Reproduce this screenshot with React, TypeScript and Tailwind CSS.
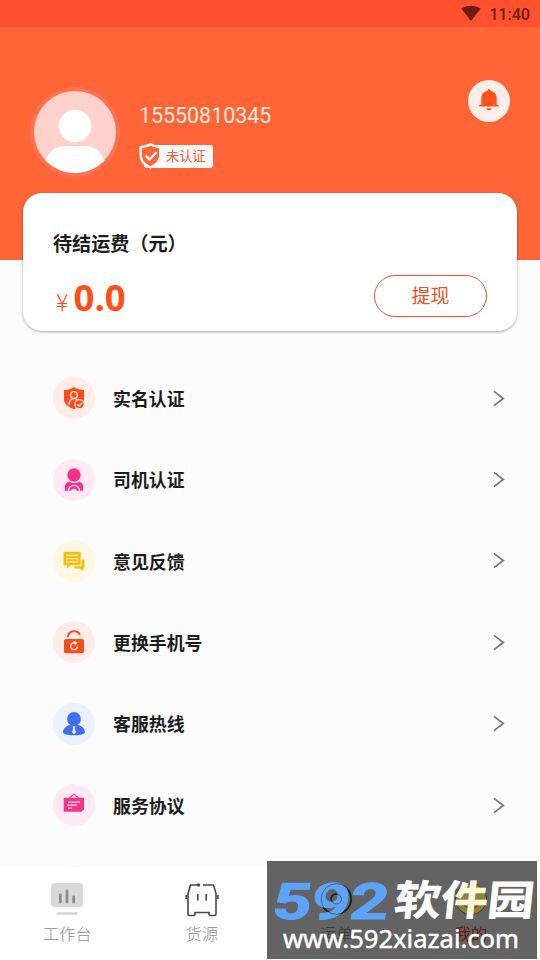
import type { ReactNode } from "react";

const menu: { label: string; bg: string; icon: ReactNode }[] = [
  { label: "实名认证", bg: "bg-[#feece6]", icon: <IdentityIcon /> },
  { label: "司机认证", bg: "bg-[#ffeaf4]", icon: <DriverIcon /> },
  { label: "意见反馈", bg: "bg-[#fdf8e4]", icon: <FeedbackIcon /> },
  { label: "更换手机号", bg: "bg-[#feece8]", icon: <LockIcon /> },
  { label: "客服热线", bg: "bg-[#ecf1fe]", icon: <ServiceIcon /> },
  { label: "服务协议", bg: "bg-[#ffeaf3]", icon: <AgreementIcon /> },
  { label: "", bg: "bg-[#fbf8d8]", icon: null },
];

export default function App() {
  return (
    <div className="relative flex h-[960px] w-[540px] flex-col overflow-hidden bg-[#fcfcfc] font-['Roboto','Noto_Sans_CJK_SC',sans-serif] text-[#1c1c1c]">
      <header className="h-[260px] shrink-0 bg-[#ff6536]">
        <div className="flex h-[27px] items-center justify-end bg-[#ff512e] pr-[10px] text-[#6b1d10]">
          <svg className="mr-[8px] h-[17px] w-[20px]" viewBox="0 0 20 17" fill="currentColor">
            <path d="M0.3 3.6C6-.3 14-.3 19.7 3.6L10 16z" />
          </svg>
          <span className="pt-[3px] text-[16.3px] leading-none font-medium tracking-[-0.1px]">11:40</span>
        </div>
        <div className="flex pl-[30px]">
          <Avatar />
          <div className="ml-[19px] flex flex-col pt-[75px]">
            <span className="text-[21.4px] leading-[27px] text-[#ffe9df]">15550810345</span>
            <Badge />
          </div>
          <button className="mt-[53px] mr-[30px] ml-auto flex size-[42px] items-center justify-center rounded-full bg-[#fdeee9]">
            <svg className="size-[24px]" viewBox="0 0 24 24" fill="#ff5217">
              <path d="M12 .2c1 0 1.500.600 1.600 1.500 3.600 1 6.100 3.600 6.100 7.100v7h1.500c.9 0 .9 1.600 0 1.600H2.800c-.9 0-.9-1.600 0-1.600h1.500v-7c0-3.500 2.500-6.100 6.100-7.100.1-.9.600-1.500 1.600-1.500z" />
              <path d="M9.200 19.300h5.600c-.4 1.300-1.400 2-2.800 2s-2.400-.7-2.800-2z" />
            </svg>
          </button>
        </div>
      </header>

      <section className="relative mx-[23px] -mt-[67px] h-[138px] shrink-0 rounded-[19px] bg-white px-[30px] pt-[38px] shadow-[0_1px_3px_rgba(0,0,0,0.35)]">
        <h1 className="text-[19.1px] leading-[27px] font-bold">待结运费（元）</h1>
        <div className="mt-[17px] flex items-center justify-between text-[#ff5019]">
          <div className="flex h-[42px] items-baseline pl-[3px]">
            <span className="mr-[5px] font-['Noto_Sans_CJK_SC',sans-serif] text-[23.5px] leading-[42px] font-light">¥</span>
            <span className="font-['Open_Sans',sans-serif] text-[36.5px] leading-[44px] font-bold">0.0</span>
          </div>
          <button className="h-[42px] w-[113px] rounded-full border-[1.5px] border-[#f15536] pt-[2px] text-[19px] text-[#ee5022]">
            提现
          </button>
        </div>
      </section>

      <ul className="mt-[26.5px] flex flex-col">
        {menu.map((m, i) => (
          <li key={i} className="flex h-[81.4px] shrink-0 items-center pr-[35px] pl-[53px]">
            <span className={`flex size-[42px] items-center justify-center rounded-full ${m.bg}`}>{m.icon}</span>
            <span className="ml-[18px] pt-[3px] text-[17.9px] leading-none font-bold">{m.label}</span>
            <svg className="ml-auto h-[17px] w-[12px]" viewBox="0 0 12 17" fill="none" stroke="#777" strokeWidth="1.700">
              <path d="M1 1.300l9.300 7.200L1 15.700" />
            </svg>
          </li>
        ))}
      </ul>

      <nav className="absolute inset-x-0 bottom-0 flex h-[93px] bg-white">
        <Tab label="工作台" icon={<DeskIcon />} />
        <Tab label="货源" icon={<CargoIcon />} />
        <Tab label="运单" icon={<OrderIcon />} />
        <Tab label="我的" icon={<MineIcon />} active />
      </nav>

      <Watermark />
    </div>
  );
}

function Tab({ label, icon, active }: { label: string; icon: ReactNode; active?: boolean }) {
  return (
    <div className="flex w-[134.600px] flex-col items-center pt-[15px]">
      {icon}
      <span className={`mt-[5px] text-[16.3px] leading-[24px] ${active ? "text-[#ff4a20]" : "font-light text-[#8e8e8e]"}`}>
        {label}
      </span>
    </div>
  );
}

function Avatar() {
  return (
    <svg className="mt-[60px] size-[90px]" viewBox="0 0 90 90">
      <defs>
        <clipPath id="face">
          <circle cx="45" cy="45" r="41" />
        </clipPath>
      </defs>
      <circle cx="45" cy="45" r="45" fill="#ff7150" />
      <circle cx="45" cy="45" r="41" fill="#ffd1cb" />
      <g fill="#fff" clipPath="url(#face)">
        <circle cx="45" cy="39" r="16.300" />
        <path d="M14 79c3-13 10-20 20-20h22c10 0 17 7 20 20v10H14z" />
      </g>
    </svg>
  );
}

function Badge() {
  return (
    <div className="relative mt-[16px] ml-[5px] flex h-[23px] w-[69px] items-center rounded-[3px] bg-[#fffaf7] pl-[22px] text-[13.2px] leading-none text-[#ee6138]">
      <svg className="absolute -top-[2px] left-[-5px] h-[26px] w-[23px]" viewBox="0 0 23 26">
        <path
          d="M11.500 1.300c2.800 1.900 5.800 2.400 9.800 3v8.200c0 5.600-4.400 9.500-9.800 12-5.400-2.500-9.800-6.400-9.800-12V4.300c4-.6 7-1.100 9.800-3z"
          fill="#ff6536"
          stroke="#fffaf7"
          strokeWidth="2.400"
        />
        <path d="M6.500 12.500l4 4.100 7-7.400" fill="none" stroke="#fffaf7" strokeWidth="2.400" />
      </svg>
      未认证
    </div>
  );
}

function IdentityIcon() {
  return (
    <svg className="size-[24px]" viewBox="0 0 24 24" fill="none" stroke="#feece6" strokeWidth="1.300">
      <path d="M12 .9c3 2.300 6.200 2.900 10 3v9.600c0 4.500-4.500 7.500-10 9.700-5.500-2.200-10-5.200-10-9.700V3.900c3.800-.1 7-.7 10-3z" fill="#fa4d17" stroke="none" />
      <circle cx="12" cy="9" r="3.300" />
      <path d="M7 18.500c0-3.500 1.700-5.600 5-6.200 1.700 0 3 .6 3.800 1.700" />
      <circle cx="17.600" cy="18.300" r="4.700" fill="#fa4d17" stroke="#feece6" />
      <path d="M15.300 18.200l1.800 1.900 3-3.400" />
    </svg>
  );
}

function DriverIcon() {
  return (
    <svg className="size-[24px]" viewBox="0 0 24 24" fill="#fb2f8c">
      <circle cx="12" cy="7" r="6.700" />
      <path d="M2.800 22.800v-3c0-3 1.400-5.200 4-6.200 2.900 2 7.500 2 10.400 0 2.600 1 4 3.200 4 6.200v3z" />
      <path d="M6.300 23c.6-3.600 2.600-5.600 5.700-5.600s5.100 2 5.700 5.600" fill="none" stroke="#ffeaf4" strokeWidth="1.300" />
      <path d="M9 23.500c.5-1.800 1.500-2.700 3-2.700s2.500.9 3 2.700z" fill="#ffeaf4" />
    </svg>
  );
}

function FeedbackIcon() {
  return (
    <svg className="size-[24px]" viewBox="0 0 24 24" fill="#efbf16">
      <path d="M19.500 10.500h3v9h-1.700v2.700l-3-2.700h-5.500v-2.300h7.200z" />
      <path d="M2.500 2.800h15.200c.6 0 1 .4 1 1v11.400c0 .6-.4 1-1 1H8.300l-3.500 3.600v-3.600H2.500c-.6 0-1-.4-1-1V3.800c0-.6.4-1 1-1z" />
      <path d="M4 6.300h12.300M4 9.700h12.300M4 13h12.300" stroke="#fdf3c5" strokeWidth="1.100" />
    </svg>
  );
}

function LockIcon() {
  return (
    <svg className="size-[24px]" viewBox="0 0 24 24" fill="none">
      <path d="M5.800 7.200C6.100 3.300 8.600 1.200 12.200 1.200c2.500 0 4.500 1.100 5.800 3.600" stroke="#f54e1e" strokeWidth="2.100" />
      <rect x="2" y="9" width="20" height="14.300" rx="2" fill="#f54e1e" />
      <path d="M13.300 13.100a3.400 3.400 0 1 0 2.100 3.300" stroke="#ffe8df" strokeWidth="1.300" />
      <path d="M11.400 11.100l4.300 1.200-2.800 3z" fill="#ffe8df" />
    </svg>
  );
}

function ServiceIcon() {
  return (
    <svg className="size-[24px]" viewBox="0 0 24 24" fill="#3f70f4">
      <circle cx="12" cy="7" r="6.900" />
      <path d="M8.400 12.800h7.200c4 1.200 6.900 3.600 7.400 6.900.3 2.600-4.700 3.500-11 3.500S.7 22.300 1 19.700c.5-3.300 3.400-5.700 7.400-6.900z" />
      <path d="M10.600 14.200h2.800l-.6 1.700 1 4.500L12 22.200l-1.800-1.800 1-4.500z" fill="#ecf1fe" />
    </svg>
  );
}

function AgreementIcon() {
  return (
    <svg className="size-[24px]" viewBox="0 0 24 24" fill="none">
      <path d="M7 5.200L12 1.200l5 4" stroke="#fb3388" strokeWidth="1.100" />
      <path d="M1.700 4.800h20.300V16.500l-2.700 2.300H1.700z" fill="#fb3388" />
      <path d="M6 9.200h12M5.300 12.200h9.500M6 15.200h4" stroke="#ffe6f1" strokeWidth="1.200" />
    </svg>
  );
}

function DeskIcon() {
  return (
    <svg className="h-[36px] w-[34px]" viewBox="0 0 34 36" strokeLinecap="round">
      <rect x="1" y="1" width="32" height="24" rx="3.500" fill="#d9d9d9" />
      <path d="M10.300 13v7M17 9v11M23.700 15v5" stroke="#8c8c8c" strokeWidth="2.800" />
      <path d="M7.500 31.500h19" stroke="#d5d5d5" strokeWidth="2.400" />
    </svg>
  );
}

function CargoIcon() {
  return (
    <svg className="h-[36px] w-[34px]" viewBox="0 0 34 36" fill="none" stroke="#474747" strokeWidth="1.600">
      <path d="M18 3h10.500L31 11.500V32c0 1-.4 1.500-1.300 1.500h-4.500c-.8 0-1.200-.5-1.200-1.300v-1.700H10v1.700c0 .8-.4 1.300-1.200 1.300H4.300C3.400 33.500 3 33 3 32V11.500L5.500 3h8" />
      <path d="M1.100 13v4M32.900 13v4M12.800 12v6.500M21.200 12v6.500" />
      <circle cx="13.500" cy="3" r="1.700" fill="#474747" stroke="none" />
    </svg>
  );
}

function OrderIcon() {
  return (
    <svg className="h-[36px] w-[34px]" viewBox="0 0 34 36" fill="none" stroke="#474747" strokeWidth="1.600">
      <circle cx="17" cy="17" r="15" />
      <circle cx="17" cy="17" r="5" />
    </svg>
  );
}

function MineIcon() {
  return (
    <svg className="h-[36px] w-[34px]" viewBox="0 0 34 36" fill="none">
      <circle cx="17" cy="17" r="15.500" fill="#ffe98a" stroke="#333" />
      <path d="M9 21c3 6 13 6 16 0" stroke="#333" strokeWidth="2" />
    </svg>
  );
}

function Watermark() {
  return (
    <div className="absolute top-[861px] left-[267px] h-[98px] w-[270px] bg-black/61">
      <svg className="h-full w-full" viewBox="0 0 270 98">
        <circle cx="204" cy="38" r="15.500" fill="#c8a840" fillOpacity="0.250" />
        <g transform="translate(4 57.500) skewX(-7)" fill="#5ca4fb" stroke="#5ca4fb" strokeWidth="1.200">
          <text
            className="font-['Roboto',sans-serif] font-bold"
            fontSize="50"
            textLength="116"
            lengthAdjust="spacingAndGlyphs"
          >
            592
          </text>
        </g>
        <g transform="translate(126 53.500) skewX(-6)" fill="#fff">
          <text
            className="font-['Noto_Sans_CJK_SC',sans-serif] font-bold"
            fontSize="41"
            textLength="140"
            lengthAdjust="spacingAndGlyphs"
            stroke="#fff"
            strokeWidth="0.600"
          >
            软件园
          </text>
        </g>
        {/* tab rings showing through the letters */}
        <g fill="none" stroke="#222" strokeOpacity="0.500">
          <circle cx="69.500" cy="38" r="15.300" />
          <circle cx="69.500" cy="38" r="5" />
        </g>
        <circle cx="204" cy="38" r="15.500" fill="#f2d340" fillOpacity="0.180" />
        <text
          className="font-['Noto_Sans','Open_Sans',sans-serif]"
          x="16"
          y="87"
          fontSize="26"
          textLength="236"
          lengthAdjust="spacingAndGlyphs"
          fill="#fff"
          stroke="#fff"
          strokeWidth="0.500"
        >
          www.592xiazai.com
        </text>
      </svg>
    </div>
  );
}
